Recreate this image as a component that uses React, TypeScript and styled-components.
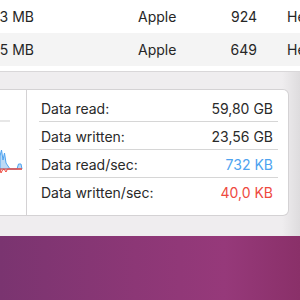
import styled, { createGlobalStyle } from 'styled-components'

const GlobalStyle = createGlobalStyle`
  html, body {
    margin: 0;
    padding: 0;
    width: 300px;
    height: 300px;
    overflow: hidden;
  }
  body {
    font-family: Inter, "Liberation Sans", sans-serif;
    -webkit-font-smoothing: antialiased;
  }
`

const Screen = styled.div`
  width: 300px;
  height: 300px;
  display: flex;
  flex-direction: column;
  background:
    radial-gradient(ellipse 140px 80px at 215px 40px, #9d3b7d 0%, rgba(157, 59, 125, 0) 100%),
    linear-gradient(90deg, #7a3470 0%, #8c3776 45%, #96397a 75%, #8a3069 100%);
`

const Window = styled.div`
  height: 232px;
  display: flex;
  flex-direction: column;
  background: #ffffff;
  flex-shrink: 0;
`

const Row = styled.div<{ $striped?: boolean; $h?: number }>`
  height: ${({ $h }) => $h ?? 33}px;
  flex-shrink: 0;
  display: grid;
  grid-template-columns: 34px 104px 91px 28px 30px 13px;
  align-items: center;
  background: ${({ $striped }) => ($striped ? '#f4f4f4' : '#ffffff')};
  font-size: 14px;
  color: #262626;
  overflow: hidden;
  white-space: nowrap;
`

const Cell = styled.div<{ $right?: boolean }>`
  display: flex;
  justify-content: ${({ $right }) => ($right ? 'flex-end' : 'flex-start')};
`

const Footer = styled.div`
  flex: 1;
  border-top: 1px solid #d9d7d9;
  background: linear-gradient(90deg, #efedef 0%, #efedef 94%, #dedcde 100%);
  padding: 17px 11px 20px 0;
  display: flex;
`

const Panel = styled.div`
  flex: 1;
  display: flex;
  background: #ffffff;
  border: 1px solid #d4d2d4;
  border-left: none;
  border-radius: 0 6px 6px 0;
  overflow: hidden;
`

const Graph = styled.div`
  width: 26px;
  flex-shrink: 0;
  border-right: 1px solid #d4d2d4;
`

const Stats = styled.div`
  flex: 1;
  display: flex;
  flex-direction: column;
  padding: 4px 10px 4px 12px;
`

const StatRow = styled.div<{ $last?: boolean }>`
  height: 28px;
  display: flex;
  align-items: center;
  justify-content: space-between;
  padding: 1px 5px 0 2px;
  border-bottom: ${({ $last }) => ($last ? 'none' : '1px solid #d6d6d6')};
  box-sizing: border-box;
  font-size: 14px;
  color: #2a2a2a;
`

const Value = styled.span<{ $color?: string }>`
  color: ${({ $color }) => $color ?? '#2a2a2a'};
`

const rows = [
  { mem: '3 MB', user: 'Apple', pid: '924', kind: 'He' },
  { mem: '5 MB', user: 'Apple', pid: '649', kind: 'He' },
]

const stats = [
  { label: 'Data read:', value: '59,80 GB' },
  { label: 'Data written:', value: '23,56 GB' },
  { label: 'Data read/sec:', value: '732 KB', color: '#4ea3ef' },
  { label: 'Data written/sec:', value: '40,0 KB', color: '#ee4a3f' },
]

function DiskGraph() {
  return (
    <svg width="26" height="121" viewBox="0 0 26 121">
      <line x1="0" y1="31" x2="10" y2="31" stroke="#cfcfcf" strokeWidth="1" />
      <path
        d="M0 79 L0 66 L1.5 60 L3 70 L4.5 63 L6 73 L8 76 L10 79 L17 79 L18.5 74 L21 74 L22 79 Z"
        fill="#bcdaf6"
        stroke="#4ea3ef"
        strokeWidth="1"
        strokeLinejoin="round"
      />
      <path
        d="M0 79 L1 83 L2.5 80 L4 79 L6 82 L7.5 79 L22 79"
        fill="none"
        stroke="#ee4a3f"
        strokeWidth="1"
      />
      <line x1="0" y1="79" x2="22" y2="79" stroke="#ee4a3f" strokeWidth="1" />
    </svg>
  )
}

export default function App() {
  return (
    <>
      <GlobalStyle />
      <Screen>
        <Window>
          {rows.map((r, i) => (
            <Row key={r.pid} $striped={i % 2 === 1}>
              <Cell $right>{r.mem}</Cell>
              <Cell />
              <Cell>{r.user}</Cell>
              <Cell $right>{r.pid}</Cell>
              <Cell />
              <Cell>{r.kind}</Cell>
            </Row>
          ))}
          <Row $h={5} />
          <Footer>
            <Panel>
              <Graph>
                <DiskGraph />
              </Graph>
              <Stats>
                {stats.map((s, i) => (
                  <StatRow key={s.label} $last={i === stats.length - 1}>
                    <span>{s.label}</span>
                    <Value $color={s.color}>{s.value}</Value>
                  </StatRow>
                ))}
              </Stats>
            </Panel>
          </Footer>
        </Window>
      </Screen>
    </>
  )
}
